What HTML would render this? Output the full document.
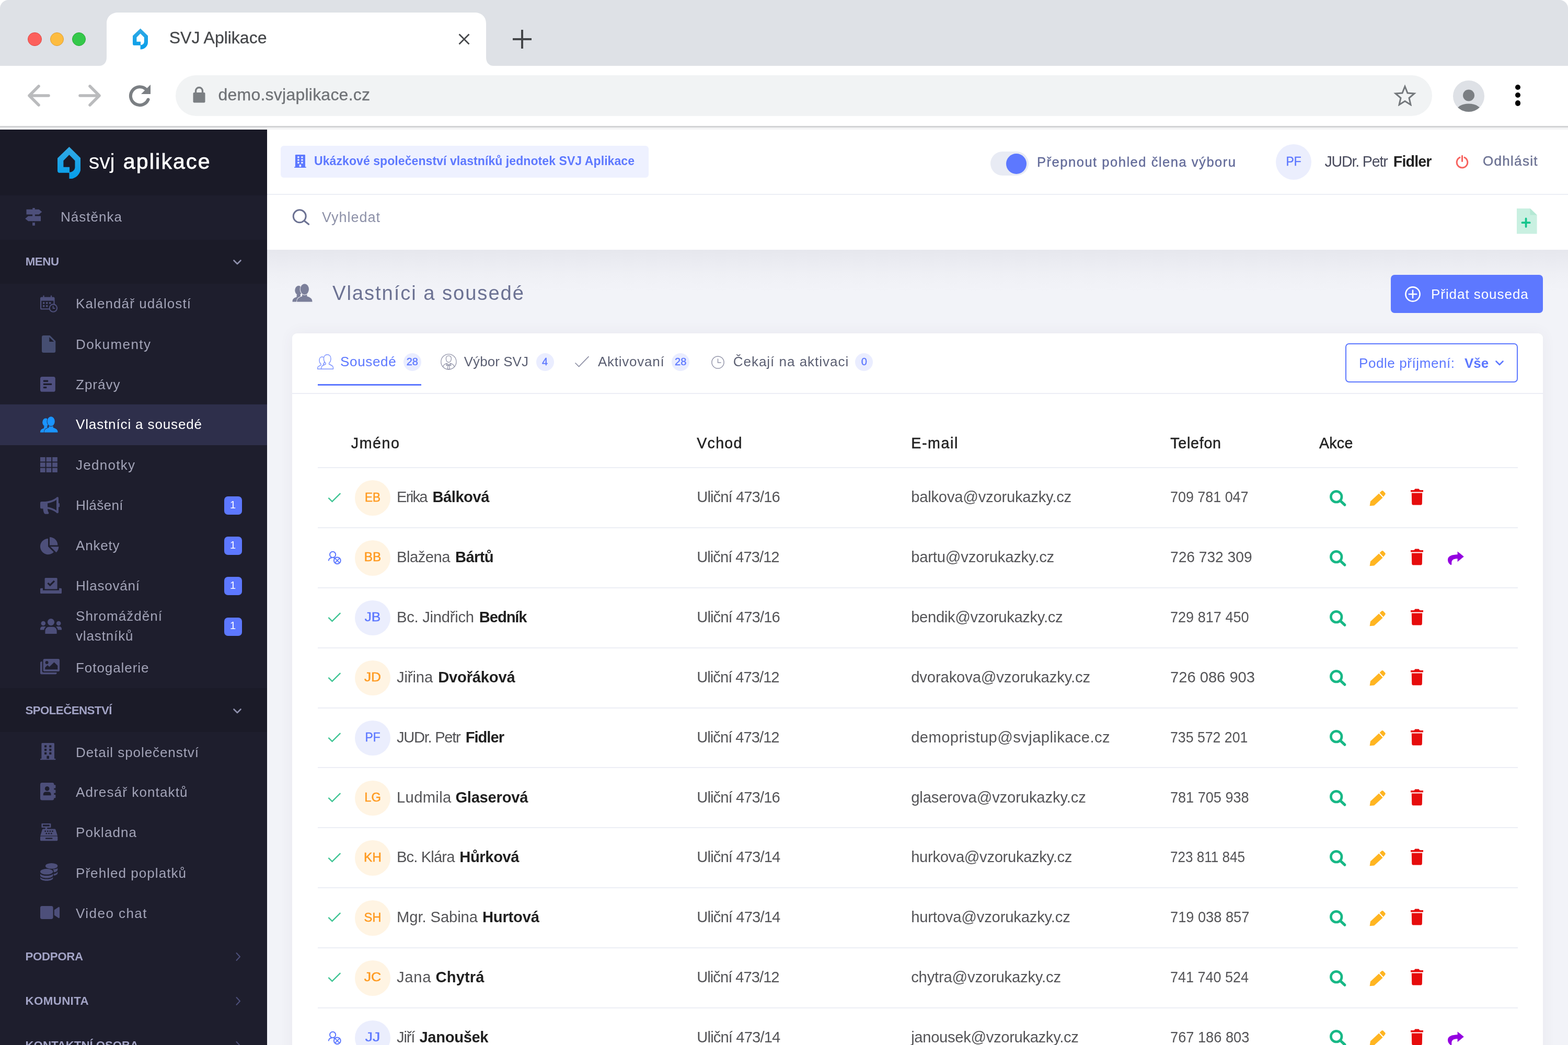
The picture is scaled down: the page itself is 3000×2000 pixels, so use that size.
<!DOCTYPE html>
<html lang="cs"><head><meta charset="utf-8"><title>SVJ Aplikace</title>
<style>
html,body{margin:0;padding:0;background:#fff;}
body{width:3000px;height:2000px;position:relative;overflow:hidden;font-family:"Liberation Sans",sans-serif;}
#root{position:absolute;left:0;top:0;width:3000px;height:2000px;overflow:hidden;will-change:transform;}
#root div,#root svg,#root span.t{position:absolute;display:block;}
span.t{white-space:pre;}
</style></head>
<body><div id="root">
<div style="left:0px;top:0px;width:3000px;height:126px;background:#dee1e6;border-radius:16px 16px 0 0;"></div>
<div style="left:0px;top:125.5px;width:3000px;height:116px;background:#ffffff;"></div>
<svg style="left:184px;top:23px" width="770" height="103" viewBox="184 23 770 103"><path d="M190 126 C198 126 204 120 204 110 L204 45 C204 32 213 24 226 24 L908 24 C921 24 930 32 930 45 L930 110 C930 120 936 126 944 126 Z" fill="#fff"/></svg>
<div style="left:53.300000000000004px;top:61.50000000000001px;width:24.8px;height:24.8px;border-radius:50%;background:#fc605c;border:1px solid #df4744"></div>
<div style="left:95.6px;top:61.50000000000001px;width:24.8px;height:24.8px;border-radius:50%;background:#fdbc40;border:1px solid #de9f34"></div>
<div style="left:137.6px;top:61.50000000000001px;width:24.8px;height:24.8px;border-radius:50%;background:#34c84a;border:1px solid #27aa35"></div>
<svg style="left:254px;top:54px" width="29" height="41" viewBox="468 62 262 363"><defs><linearGradient id="lg1" x1="0" y1="0" x2="0" y2="1"><stop offset="0" stop-color="#33a9e4"/><stop offset="1" stop-color="#049eea"/></linearGradient></defs><path fill-rule="evenodd" fill="url(#lg1)" d="M600 62 L730 190 L730 300 A130 125 0 0 1 600 425 L600 355 L494 355 Q468 355 468 329 L468 190 Z M600 152 L535 217 L535 290 L604 290 L604 349 A62 58 0 0 0 665 295 L665 217 Z"/></svg>
<svg style="left:876px;top:63px" width="24" height="24" viewBox="0 0 24 24"><path d="M2.5 2.5 L21.5 21.5 M21.5 2.5 L2.5 21.5" stroke="#45474a" stroke-width="2.8" fill="none"/></svg>
<svg style="left:980px;top:56px" width="38" height="38" viewBox="0 0 38 38"><path d="M19 1 V37 M1 19 H37" stroke="#45474a" stroke-width="4" fill="none"/></svg>
<svg style="left:50px;top:160px" width="50" height="46" viewBox="0 0 50 46"><path d="M43 23 H7 M24 5 L6 23 L24 41" stroke="#babbbd" stroke-width="5.5" fill="none" stroke-linecap="round" stroke-linejoin="round"/></svg>
<svg style="left:146px;top:160px" width="50" height="46" viewBox="0 0 50 46"><path d="M7 23 H43 M26 5 L44 23 L26 41" stroke="#babbbd" stroke-width="5.5" fill="none" stroke-linecap="round" stroke-linejoin="round"/></svg>
<svg style="left:242px;top:158px" width="52" height="52" viewBox="0 0 52 52"><path d="M41.5 32.5 A17.5 17.5 0 1 1 38 13.5" stroke="#7b7f83" stroke-width="6" fill="none" stroke-linecap="round"/><path d="M46 4 V22 H28 Z" fill="#7b7f83"/></svg>
<div style="left:336px;top:144px;width:2404px;height:78px;background:#f1f3f4;border-radius:39px;"></div>
<svg style="left:369px;top:165px" width="24" height="32" viewBox="0 0 24 32"><path d="M5.5 13 V9 a6.5 6.5 0 0 1 13 0 V13" stroke="#7b7f83" stroke-width="3.4" fill="none"/><rect x="0.5" y="12" width="23" height="19.5" rx="2" fill="#7b7f83"/></svg>
<svg style="left:2666px;top:161px" width="44" height="42" viewBox="0 0 44 42"><path d="M22 4.5 L27 17 L40 18 L30 26.5 L33 39.5 L22 32.5 L11 39.5 L14 26.5 L4 18 L17 17 Z" stroke="#74787c" stroke-width="3" fill="none" stroke-linejoin="miter"/></svg>
<svg style="left:2779.5px;top:153.5px" width="60" height="60" viewBox="0 0 60 60"><defs><clipPath id="cpa"><circle cx="30" cy="30" r="30"/></clipPath></defs><circle cx="30" cy="30" r="30" fill="#dee1e6"/><g clip-path="url(#cpa)" fill="#7b7f83"><circle cx="30" cy="28.5" r="11"/><ellipse cx="30" cy="62" rx="26" ry="17.5"/></g></svg>
<div style="left:2898.55px;top:161.55px;width:10.4px;height:10.4px;border-radius:50%;background:#000"></div>
<div style="left:2898.55px;top:177.0px;width:10.4px;height:10.4px;border-radius:50%;background:#000"></div>
<div style="left:2898.55px;top:192.4px;width:10.4px;height:10.4px;border-radius:50%;background:#000"></div>
<div style="left:0px;top:241px;width:3000px;height:3px;background:#d2d3d5;"></div>
<div style="left:0px;top:244px;width:3000px;height:4px;background:#f4f4f5;"></div>
<div style="left:511px;top:248px;width:2489px;height:1752px;background:#f2f3f8;"></div>
<div style="left:511px;top:477px;width:2489px;height:80px;background:linear-gradient(to bottom,#e6e7ed 0%,#eaebf1 28%,#eff0f5 60%,#f2f3f8 100%);"></div>
<div style="left:511px;top:248px;width:2489px;height:124px;background:#ffffff;"></div>
<div style="left:511px;top:371px;width:2489px;height:2px;background:#eceef5;"></div>
<div style="left:511px;top:373px;width:2489px;height:104.5px;background:#ffffff;"></div>
<div style="left:0px;top:248px;width:511px;height:1752px;background:#1e1e2d;"></div>
<div style="left:0px;top:248px;width:511px;height:126px;background:#1a1a27;"></div>
<div style="left:0px;top:458.5px;width:511px;height:84px;background:#1b1b28;"></div>
<div style="left:0px;top:774px;width:511px;height:77.5px;background:#2e2f4b;"></div>
<div style="left:0px;top:1317px;width:511px;height:84px;background:#1b1b28;"></div>
<svg style="left:109.6px;top:280.5px" width="44.5" height="61.8" viewBox="468 62 262 363"><path fill-rule="evenodd" fill="url(#lg1)" d="M600 62 L730 190 L730 300 A130 125 0 0 1 600 425 L600 355 L494 355 Q468 355 468 329 L468 190 Z M600 152 L535 217 L535 290 L604 290 L604 349 A62 58 0 0 0 665 295 L665 217 Z"/></svg>
<div style="left:428.6px;top:950.0px;width:34.6px;height:35px;background:#5d78ff;border-radius:7px;"></div>
<div style="left:428.6px;top:1027.0px;width:34.6px;height:35px;background:#5d78ff;border-radius:7px;"></div>
<div style="left:428.6px;top:1104.0px;width:34.6px;height:35px;background:#5d78ff;border-radius:7px;"></div>
<div style="left:428.6px;top:1181.5px;width:34.6px;height:35px;background:#5d78ff;border-radius:7px;"></div>
<svg style="left:444.2px;top:496.0px" width="20.0" height="12.0" viewBox="0 0 20 12"><path d="M3.5 2.5 L10 9 L16.5 2.5" stroke="#8f90ad" stroke-width="2.6" fill="none" stroke-linecap="round" stroke-linejoin="round"/></svg>
<svg style="left:444.2px;top:1355.0px" width="20.0" height="12.0" viewBox="0 0 20 12"><path d="M3.5 2.5 L10 9 L16.5 2.5" stroke="#8f90ad" stroke-width="2.6" fill="none" stroke-linecap="round" stroke-linejoin="round"/></svg>
<svg style="left:449.5px;top:1821px" width="12" height="20" viewBox="0 0 12 20"><path d="M2.5 3 L9 10 L2.5 17" stroke="#4d4f7a" stroke-width="2" fill="none" stroke-linecap="round" stroke-linejoin="round"/></svg>
<svg style="left:449.5px;top:1906px" width="12" height="20" viewBox="0 0 12 20"><path d="M2.5 3 L9 10 L2.5 17" stroke="#4d4f7a" stroke-width="2" fill="none" stroke-linecap="round" stroke-linejoin="round"/></svg>
<svg style="left:449.5px;top:1991px" width="12" height="20" viewBox="0 0 12 20"><path d="M2.5 3 L9 10 L2.5 17" stroke="#4d4f7a" stroke-width="2" fill="none" stroke-linecap="round" stroke-linejoin="round"/></svg>
<div style="left:536.7px;top:279px;width:704px;height:61px;background:#eef1ff;border-radius:6px;"></div>
<div style="left:1894.5px;top:290px;width:73.5px;height:46px;background:#e8ebf4;border-radius:23px;"></div>
<div style="left:1924.75px;top:293.5px;width:39.5px;height:39.5px;background:#5d78ff;border-radius:50%;"></div>
<div style="left:2440.5px;top:276px;width:68px;height:68px;background:#ebeefd;border-radius:50%;"></div>
<div style="left:2660.5px;top:525.75px;width:291.25px;height:73.5px;background:#5d78ff;border-radius:7px;"></div>
<div style="left:559.3px;top:637.5px;width:2392.5px;height:1400px;background:#ffffff;border-radius:9px;box-shadow:0 0 28px rgba(82,63,105,0.06);"></div>
<div style="left:559.3px;top:751.5px;width:2392.5px;height:2px;background:#eceef5;"></div>
<div style="left:771.8px;top:676.2px;width:34px;height:34px;background:#eaedff;border-radius:50%;"></div>
<div style="left:1025.5px;top:676.2px;width:34px;height:34px;background:#eaedff;border-radius:50%;"></div>
<div style="left:1285.2px;top:676.2px;width:34px;height:34px;background:#eaedff;border-radius:50%;"></div>
<div style="left:1636.2px;top:676.2px;width:34px;height:34px;background:#eaedff;border-radius:50%;"></div>
<div style="left:607.7px;top:735px;width:198.6px;height:3.2px;background:#5d78ff;"></div>
<div style="left:2573.75px;top:657px;width:326px;height:71px;border:2px solid #5d78ff;border-radius:7px;background:#fff"></div>
<svg style="left:2859.0px;top:688.5px" width="20.0" height="12.0" viewBox="0 0 20 12"><path d="M3.5 2.5 L10 9 L16.5 2.5" stroke="#5d78ff" stroke-width="2.6" fill="none" stroke-linecap="round" stroke-linejoin="round"/></svg>
<div style="left:607.5px;top:894.1px;width:2296px;height:2px;background:#eceef5;"></div>
<div style="left:679.25px;top:919.25px;width:67.5px;height:67.5px;background:#fff4e3;border-radius:50%;"></div>
<svg style="left:626px;top:938.5px;overflow:visible" width="28" height="20" viewBox="0 -1.6 28 20"><path d="M2.4 12.3 L9.5 19.2 L25.3 3.5" fill="none" stroke="#3ec493" stroke-width="2.3"/></svg>
<svg style="left:2544.3px;top:937.8px;overflow:visible" width="31.5" height="30.8" viewBox="0 0 31.5 30.8"><circle cx="12.7" cy="12.7" r="10.3" fill="none" stroke="#18b886" stroke-width="4.7"/><path d="M20.6 20.6 L28.8 28.2" stroke="#18b886" stroke-width="5.2" stroke-linecap="round"/></svg>
<svg style="left:2620px;top:937.8px;overflow:visible" width="31.3" height="30.8" viewBox="0 0 31.3 30.8"><g fill="#ffb521"><path d="M0.6 30.3 L2 21.4 L18.2 6.6 L25.6 14.4 L9.2 29.4 Z"/><path d="M19.6 5.2 L23.4 1.6 Q25 0.2 26.6 1.8 L30.2 5.6 Q31.6 7.2 30 8.8 L26.8 12.8 Z"/></g></svg>
<svg style="left:2698.6px;top:935.3px;overflow:visible" width="24" height="31.6" viewBox="0 0 24 31.6"><g fill="#e60c0c"><path d="M0 3 H6.5 L8.4 0.4 H15.6 L17.5 3 H24 V6.6 H0 Z"/><path d="M1.8 8.6 H22.2 L21.8 28.4 Q21.6 31.6 18.4 31.6 H5.6 Q2.4 31.6 2.2 28.4 Z"/></g></svg>
<div style="left:607.5px;top:1008.95px;width:2296px;height:2px;background:#eceef5;"></div>
<div style="left:679.25px;top:1034.1px;width:67.5px;height:67.5px;background:#fff4e3;border-radius:50%;"></div>
<svg style="left:626px;top:1053.85px;overflow:visible" width="30" height="30" viewBox="0 0 30 30"><g fill="none" stroke="#5d78ff" stroke-width="2"><circle cx="10.6" cy="7.4" r="5.6"/>
<path d="M2.6 19.4 C3 15.6 6 13.4 9.4 13.2"/><path d="M11.8 13.2 C13.2 13.4 14.2 13.8 15 14.4"/><circle cx="19.3" cy="18.8" r="6.4"/><path d="M14.8 14.3 L23.8 23.3 M23.8 14.3 L14.8 23.3" stroke-width="1.7"/></g></svg>
<svg style="left:2544.3px;top:1052.6499999999999px;overflow:visible" width="31.5" height="30.8" viewBox="0 0 31.5 30.8"><circle cx="12.7" cy="12.7" r="10.3" fill="none" stroke="#18b886" stroke-width="4.7"/><path d="M20.6 20.6 L28.8 28.2" stroke="#18b886" stroke-width="5.2" stroke-linecap="round"/></svg>
<svg style="left:2620px;top:1052.6499999999999px;overflow:visible" width="31.3" height="30.8" viewBox="0 0 31.3 30.8"><g fill="#ffb521"><path d="M0.6 30.3 L2 21.4 L18.2 6.6 L25.6 14.4 L9.2 29.4 Z"/><path d="M19.6 5.2 L23.4 1.6 Q25 0.2 26.6 1.8 L30.2 5.6 Q31.6 7.2 30 8.8 L26.8 12.8 Z"/></g></svg>
<svg style="left:2698.6px;top:1050.1499999999999px;overflow:visible" width="24" height="31.6" viewBox="0 0 24 31.6"><g fill="#e60c0c"><path d="M0 3 H6.5 L8.4 0.4 H15.6 L17.5 3 H24 V6.6 H0 Z"/><path d="M1.8 8.6 H22.2 L21.8 28.4 Q21.6 31.6 18.4 31.6 H5.6 Q2.4 31.6 2.2 28.4 Z"/></g></svg>
<svg style="left:2770.4px;top:1054.85px;overflow:visible" width="31" height="27" viewBox="0 0 31 27"><path d="M18.6 0.4 L30.8 10.2 L18.6 20.2 V14.3 C10.5 14.3 6.6 17 7.4 24 Q7.6 25.8 6 26.6 C2.2 24 0 20.4 0 16.4 C0 9 8 6.4 18.6 6.2 Z" fill="#9400e0"/></svg>
<div style="left:607.5px;top:1123.8px;width:2296px;height:2px;background:#eceef5;"></div>
<div style="left:679.25px;top:1148.95px;width:67.5px;height:67.5px;background:#ebeefd;border-radius:50%;"></div>
<svg style="left:626px;top:1168.2px;overflow:visible" width="28" height="20" viewBox="0 -1.6 28 20"><path d="M2.4 12.3 L9.5 19.2 L25.3 3.5" fill="none" stroke="#3ec493" stroke-width="2.3"/></svg>
<svg style="left:2544.3px;top:1167.5px;overflow:visible" width="31.5" height="30.8" viewBox="0 0 31.5 30.8"><circle cx="12.7" cy="12.7" r="10.3" fill="none" stroke="#18b886" stroke-width="4.7"/><path d="M20.6 20.6 L28.8 28.2" stroke="#18b886" stroke-width="5.2" stroke-linecap="round"/></svg>
<svg style="left:2620px;top:1167.5px;overflow:visible" width="31.3" height="30.8" viewBox="0 0 31.3 30.8"><g fill="#ffb521"><path d="M0.6 30.3 L2 21.4 L18.2 6.6 L25.6 14.4 L9.2 29.4 Z"/><path d="M19.6 5.2 L23.4 1.6 Q25 0.2 26.6 1.8 L30.2 5.6 Q31.6 7.2 30 8.8 L26.8 12.8 Z"/></g></svg>
<svg style="left:2698.6px;top:1165.0px;overflow:visible" width="24" height="31.6" viewBox="0 0 24 31.6"><g fill="#e60c0c"><path d="M0 3 H6.5 L8.4 0.4 H15.6 L17.5 3 H24 V6.6 H0 Z"/><path d="M1.8 8.6 H22.2 L21.8 28.4 Q21.6 31.6 18.4 31.6 H5.6 Q2.4 31.6 2.2 28.4 Z"/></g></svg>
<div style="left:607.5px;top:1238.6499999999999px;width:2296px;height:2px;background:#eceef5;"></div>
<div style="left:679.25px;top:1263.8px;width:67.5px;height:67.5px;background:#fff4e3;border-radius:50%;"></div>
<svg style="left:626px;top:1283.05px;overflow:visible" width="28" height="20" viewBox="0 -1.6 28 20"><path d="M2.4 12.3 L9.5 19.2 L25.3 3.5" fill="none" stroke="#3ec493" stroke-width="2.3"/></svg>
<svg style="left:2544.3px;top:1282.35px;overflow:visible" width="31.5" height="30.8" viewBox="0 0 31.5 30.8"><circle cx="12.7" cy="12.7" r="10.3" fill="none" stroke="#18b886" stroke-width="4.7"/><path d="M20.6 20.6 L28.8 28.2" stroke="#18b886" stroke-width="5.2" stroke-linecap="round"/></svg>
<svg style="left:2620px;top:1282.35px;overflow:visible" width="31.3" height="30.8" viewBox="0 0 31.3 30.8"><g fill="#ffb521"><path d="M0.6 30.3 L2 21.4 L18.2 6.6 L25.6 14.4 L9.2 29.4 Z"/><path d="M19.6 5.2 L23.4 1.6 Q25 0.2 26.6 1.8 L30.2 5.6 Q31.6 7.2 30 8.8 L26.8 12.8 Z"/></g></svg>
<svg style="left:2698.6px;top:1279.85px;overflow:visible" width="24" height="31.6" viewBox="0 0 24 31.6"><g fill="#e60c0c"><path d="M0 3 H6.5 L8.4 0.4 H15.6 L17.5 3 H24 V6.6 H0 Z"/><path d="M1.8 8.6 H22.2 L21.8 28.4 Q21.6 31.6 18.4 31.6 H5.6 Q2.4 31.6 2.2 28.4 Z"/></g></svg>
<div style="left:607.5px;top:1353.5px;width:2296px;height:2px;background:#eceef5;"></div>
<div style="left:679.25px;top:1378.65px;width:67.5px;height:67.5px;background:#ebeefd;border-radius:50%;"></div>
<svg style="left:626px;top:1397.9px;overflow:visible" width="28" height="20" viewBox="0 -1.6 28 20"><path d="M2.4 12.3 L9.5 19.2 L25.3 3.5" fill="none" stroke="#3ec493" stroke-width="2.3"/></svg>
<svg style="left:2544.3px;top:1397.2px;overflow:visible" width="31.5" height="30.8" viewBox="0 0 31.5 30.8"><circle cx="12.7" cy="12.7" r="10.3" fill="none" stroke="#18b886" stroke-width="4.7"/><path d="M20.6 20.6 L28.8 28.2" stroke="#18b886" stroke-width="5.2" stroke-linecap="round"/></svg>
<svg style="left:2620px;top:1397.2px;overflow:visible" width="31.3" height="30.8" viewBox="0 0 31.3 30.8"><g fill="#ffb521"><path d="M0.6 30.3 L2 21.4 L18.2 6.6 L25.6 14.4 L9.2 29.4 Z"/><path d="M19.6 5.2 L23.4 1.6 Q25 0.2 26.6 1.8 L30.2 5.6 Q31.6 7.2 30 8.8 L26.8 12.8 Z"/></g></svg>
<svg style="left:2698.6px;top:1394.7px;overflow:visible" width="24" height="31.6" viewBox="0 0 24 31.6"><g fill="#e60c0c"><path d="M0 3 H6.5 L8.4 0.4 H15.6 L17.5 3 H24 V6.6 H0 Z"/><path d="M1.8 8.6 H22.2 L21.8 28.4 Q21.6 31.6 18.4 31.6 H5.6 Q2.4 31.6 2.2 28.4 Z"/></g></svg>
<div style="left:607.5px;top:1468.35px;width:2296px;height:2px;background:#eceef5;"></div>
<div style="left:679.25px;top:1493.5px;width:67.5px;height:67.5px;background:#fff4e3;border-radius:50%;"></div>
<svg style="left:626px;top:1512.75px;overflow:visible" width="28" height="20" viewBox="0 -1.6 28 20"><path d="M2.4 12.3 L9.5 19.2 L25.3 3.5" fill="none" stroke="#3ec493" stroke-width="2.3"/></svg>
<svg style="left:2544.3px;top:1512.05px;overflow:visible" width="31.5" height="30.8" viewBox="0 0 31.5 30.8"><circle cx="12.7" cy="12.7" r="10.3" fill="none" stroke="#18b886" stroke-width="4.7"/><path d="M20.6 20.6 L28.8 28.2" stroke="#18b886" stroke-width="5.2" stroke-linecap="round"/></svg>
<svg style="left:2620px;top:1512.05px;overflow:visible" width="31.3" height="30.8" viewBox="0 0 31.3 30.8"><g fill="#ffb521"><path d="M0.6 30.3 L2 21.4 L18.2 6.6 L25.6 14.4 L9.2 29.4 Z"/><path d="M19.6 5.2 L23.4 1.6 Q25 0.2 26.6 1.8 L30.2 5.6 Q31.6 7.2 30 8.8 L26.8 12.8 Z"/></g></svg>
<svg style="left:2698.6px;top:1509.55px;overflow:visible" width="24" height="31.6" viewBox="0 0 24 31.6"><g fill="#e60c0c"><path d="M0 3 H6.5 L8.4 0.4 H15.6 L17.5 3 H24 V6.6 H0 Z"/><path d="M1.8 8.6 H22.2 L21.8 28.4 Q21.6 31.6 18.4 31.6 H5.6 Q2.4 31.6 2.2 28.4 Z"/></g></svg>
<div style="left:607.5px;top:1583.1999999999998px;width:2296px;height:2px;background:#eceef5;"></div>
<div style="left:679.25px;top:1608.35px;width:67.5px;height:67.5px;background:#fff4e3;border-radius:50%;"></div>
<svg style="left:626px;top:1627.6px;overflow:visible" width="28" height="20" viewBox="0 -1.6 28 20"><path d="M2.4 12.3 L9.5 19.2 L25.3 3.5" fill="none" stroke="#3ec493" stroke-width="2.3"/></svg>
<svg style="left:2544.3px;top:1626.8999999999999px;overflow:visible" width="31.5" height="30.8" viewBox="0 0 31.5 30.8"><circle cx="12.7" cy="12.7" r="10.3" fill="none" stroke="#18b886" stroke-width="4.7"/><path d="M20.6 20.6 L28.8 28.2" stroke="#18b886" stroke-width="5.2" stroke-linecap="round"/></svg>
<svg style="left:2620px;top:1626.8999999999999px;overflow:visible" width="31.3" height="30.8" viewBox="0 0 31.3 30.8"><g fill="#ffb521"><path d="M0.6 30.3 L2 21.4 L18.2 6.6 L25.6 14.4 L9.2 29.4 Z"/><path d="M19.6 5.2 L23.4 1.6 Q25 0.2 26.6 1.8 L30.2 5.6 Q31.6 7.2 30 8.8 L26.8 12.8 Z"/></g></svg>
<svg style="left:2698.6px;top:1624.3999999999999px;overflow:visible" width="24" height="31.6" viewBox="0 0 24 31.6"><g fill="#e60c0c"><path d="M0 3 H6.5 L8.4 0.4 H15.6 L17.5 3 H24 V6.6 H0 Z"/><path d="M1.8 8.6 H22.2 L21.8 28.4 Q21.6 31.6 18.4 31.6 H5.6 Q2.4 31.6 2.2 28.4 Z"/></g></svg>
<div style="left:607.5px;top:1698.0499999999997px;width:2296px;height:2px;background:#eceef5;"></div>
<div style="left:679.25px;top:1723.1999999999998px;width:67.5px;height:67.5px;background:#fff4e3;border-radius:50%;"></div>
<svg style="left:626px;top:1742.4499999999998px;overflow:visible" width="28" height="20" viewBox="0 -1.6 28 20"><path d="M2.4 12.3 L9.5 19.2 L25.3 3.5" fill="none" stroke="#3ec493" stroke-width="2.3"/></svg>
<svg style="left:2544.3px;top:1741.7499999999998px;overflow:visible" width="31.5" height="30.8" viewBox="0 0 31.5 30.8"><circle cx="12.7" cy="12.7" r="10.3" fill="none" stroke="#18b886" stroke-width="4.7"/><path d="M20.6 20.6 L28.8 28.2" stroke="#18b886" stroke-width="5.2" stroke-linecap="round"/></svg>
<svg style="left:2620px;top:1741.7499999999998px;overflow:visible" width="31.3" height="30.8" viewBox="0 0 31.3 30.8"><g fill="#ffb521"><path d="M0.6 30.3 L2 21.4 L18.2 6.6 L25.6 14.4 L9.2 29.4 Z"/><path d="M19.6 5.2 L23.4 1.6 Q25 0.2 26.6 1.8 L30.2 5.6 Q31.6 7.2 30 8.8 L26.8 12.8 Z"/></g></svg>
<svg style="left:2698.6px;top:1739.2499999999998px;overflow:visible" width="24" height="31.6" viewBox="0 0 24 31.6"><g fill="#e60c0c"><path d="M0 3 H6.5 L8.4 0.4 H15.6 L17.5 3 H24 V6.6 H0 Z"/><path d="M1.8 8.6 H22.2 L21.8 28.4 Q21.6 31.6 18.4 31.6 H5.6 Q2.4 31.6 2.2 28.4 Z"/></g></svg>
<div style="left:607.5px;top:1812.8999999999999px;width:2296px;height:2px;background:#eceef5;"></div>
<div style="left:679.25px;top:1838.05px;width:67.5px;height:67.5px;background:#fff4e3;border-radius:50%;"></div>
<svg style="left:626px;top:1857.3px;overflow:visible" width="28" height="20" viewBox="0 -1.6 28 20"><path d="M2.4 12.3 L9.5 19.2 L25.3 3.5" fill="none" stroke="#3ec493" stroke-width="2.3"/></svg>
<svg style="left:2544.3px;top:1856.6px;overflow:visible" width="31.5" height="30.8" viewBox="0 0 31.5 30.8"><circle cx="12.7" cy="12.7" r="10.3" fill="none" stroke="#18b886" stroke-width="4.7"/><path d="M20.6 20.6 L28.8 28.2" stroke="#18b886" stroke-width="5.2" stroke-linecap="round"/></svg>
<svg style="left:2620px;top:1856.6px;overflow:visible" width="31.3" height="30.8" viewBox="0 0 31.3 30.8"><g fill="#ffb521"><path d="M0.6 30.3 L2 21.4 L18.2 6.6 L25.6 14.4 L9.2 29.4 Z"/><path d="M19.6 5.2 L23.4 1.6 Q25 0.2 26.6 1.8 L30.2 5.6 Q31.6 7.2 30 8.8 L26.8 12.8 Z"/></g></svg>
<svg style="left:2698.6px;top:1854.1px;overflow:visible" width="24" height="31.6" viewBox="0 0 24 31.6"><g fill="#e60c0c"><path d="M0 3 H6.5 L8.4 0.4 H15.6 L17.5 3 H24 V6.6 H0 Z"/><path d="M1.8 8.6 H22.2 L21.8 28.4 Q21.6 31.6 18.4 31.6 H5.6 Q2.4 31.6 2.2 28.4 Z"/></g></svg>
<div style="left:607.5px;top:1927.7499999999998px;width:2296px;height:2px;background:#eceef5;"></div>
<div style="left:679.25px;top:1952.8999999999999px;width:67.5px;height:67.5px;background:#ebeefd;border-radius:50%;"></div>
<svg style="left:626px;top:1972.6499999999999px;overflow:visible" width="30" height="30" viewBox="0 0 30 30"><g fill="none" stroke="#5d78ff" stroke-width="2"><circle cx="10.6" cy="7.4" r="5.6"/>
<path d="M2.6 19.4 C3 15.6 6 13.4 9.4 13.2"/><path d="M11.8 13.2 C13.2 13.4 14.2 13.8 15 14.4"/><circle cx="19.3" cy="18.8" r="6.4"/><path d="M14.8 14.3 L23.8 23.3 M23.8 14.3 L14.8 23.3" stroke-width="1.7"/></g></svg>
<svg style="left:2544.3px;top:1971.4499999999998px;overflow:visible" width="31.5" height="30.8" viewBox="0 0 31.5 30.8"><circle cx="12.7" cy="12.7" r="10.3" fill="none" stroke="#18b886" stroke-width="4.7"/><path d="M20.6 20.6 L28.8 28.2" stroke="#18b886" stroke-width="5.2" stroke-linecap="round"/></svg>
<svg style="left:2620px;top:1971.4499999999998px;overflow:visible" width="31.3" height="30.8" viewBox="0 0 31.3 30.8"><g fill="#ffb521"><path d="M0.6 30.3 L2 21.4 L18.2 6.6 L25.6 14.4 L9.2 29.4 Z"/><path d="M19.6 5.2 L23.4 1.6 Q25 0.2 26.6 1.8 L30.2 5.6 Q31.6 7.2 30 8.8 L26.8 12.8 Z"/></g></svg>
<svg style="left:2698.6px;top:1968.9499999999998px;overflow:visible" width="24" height="31.6" viewBox="0 0 24 31.6"><g fill="#e60c0c"><path d="M0 3 H6.5 L8.4 0.4 H15.6 L17.5 3 H24 V6.6 H0 Z"/><path d="M1.8 8.6 H22.2 L21.8 28.4 Q21.6 31.6 18.4 31.6 H5.6 Q2.4 31.6 2.2 28.4 Z"/></g></svg>
<svg style="left:2770.4px;top:1973.6499999999999px;overflow:visible" width="31" height="27" viewBox="0 0 31 27"><path d="M18.6 0.4 L30.8 10.2 L18.6 20.2 V14.3 C10.5 14.3 6.6 17 7.4 24 Q7.6 25.8 6 26.6 C2.2 24 0 20.4 0 16.4 C0 9 8 6.4 18.6 6.2 Z" fill="#9400e0"/></svg>
<svg style="left:48.4px;top:398.4px;overflow:visible" width="33" height="33.5" viewBox="0 0 33 33.5"><g fill="#4d4f7a"><rect x="14.3" y="0" width="4.4" height="33.5"/>
<path d="M2.5 2.8 H26.5 L32.3 7.6 L26.5 12.4 H2.5 Z"/><path d="M30 15.6 H6 L0.2 20.4 L6 25.2 H30 Z"/></g>
<rect x="14.3" y="12.4" width="4.4" height="3.2" fill="#4d4f7a"/><rect x="14.3" y="25.2" width="4.4" height="3" fill="#1e1e2d"/><rect x="14.3" y="28.2" width="4.4" height="5.3" fill="#4d4f7a"/></svg>
<svg style="left:77px;top:564.7px;overflow:visible" width="33.5" height="32.8" viewBox="0 0 33.5 32.8"><g fill="none" stroke="#4d4f7a" stroke-width="2.2"><rect x="1.1" y="4.6" width="25.4" height="21.8" rx="1.5"/>
<path d="M6.5 0.5 V6 M21 0.5 V6"/></g><rect x="1.1" y="4.6" width="25.4" height="6" fill="#4d4f7a"/>
<g fill="#4d4f7a"><rect x="5" y="13.2" width="3.4" height="3.4"/><rect x="11" y="13.2" width="3.4" height="3.4"/><rect x="17" y="13.2" width="3.4" height="3.4"/><rect x="5" y="19" width="3.4" height="3.4"/><rect x="11" y="19" width="3.4" height="3.4"/></g>
<circle cx="24.9" cy="24.6" r="7.2" fill="#1e1e2d" stroke="#4d4f7a" stroke-width="2.1"/><path d="M24.6 20.5 V25 H28.3" fill="none" stroke="#4d4f7a" stroke-width="1.9"/></svg>
<svg style="left:80.4px;top:641.6px;overflow:visible" width="26.3" height="32.9" viewBox="0 0 26.3 32.9"><path d="M3.2 0 H15.5 L26.3 10.8 V29.7 a3.2 3.2 0 0 1 -3.2 3.2 H3.2 a3.2 3.2 0 0 1 -3.2 -3.2 V3.2 a3.2 3.2 0 0 1 3.2 -3.2 Z" fill="#464e72"/>
<path d="M14.3 3.2 V12 H23.3 Z" fill="#1e1e2d"/></svg>
<svg style="left:77.2px;top:720.8px;overflow:visible" width="28.8" height="28.8" viewBox="0 0 28.8 28.8"><rect width="28.8" height="28.8" rx="3.6" fill="#4f5080"/>
<g fill="#1e1e2d"><rect x="5.8" y="6.6" width="9.4" height="3.3" rx="1"/><rect x="5.8" y="12.8" width="16.4" height="3.3" rx="1"/><rect x="5.8" y="19" width="6.6" height="3.3" rx="1"/></g></svg>
<svg style="left:77px;top:797.2px;overflow:visible" width="33.6" height="30.8" viewBox="0 0 33.6 30.8"><g fill="#1a94ff">
<ellipse cx="10.4" cy="11.2" rx="6.2" ry="7.8"/><path d="M0 30.8 C0 26 1.5 24.6 7.2 22.4 V18.5 H13.6 V22.4 C17 24 19 25.5 19 30.8 Z"/></g>
<g fill="#1a94ff" stroke="#2e2f4b" stroke-width="1.8" paint-order="stroke">
<path d="M7.6 30.8 C7.6 25.5 9.5 24 16.5 21.3 V17 H24.6 V21.3 C31.5 24 33.6 25.5 33.6 30.8 Z"/><ellipse cx="20.6" cy="9.4" rx="7.2" ry="9.2"/></g>
<rect x="-1" y="30.8" width="36" height="3" fill="#2e2f4b"/></svg>
<svg style="left:77.2px;top:875.2px;overflow:visible" width="32.8" height="29" viewBox="0 0 32.8 29"><g fill="#4d4f7a"><rect x="0" y="0" width="9.6" height="8.4"/><rect x="0" y="10.3" width="9.6" height="8.4"/><rect x="0" y="20.6" width="9.6" height="8.4"/><rect x="11.6" y="0" width="9.6" height="8.4"/><rect x="11.6" y="10.3" width="9.6" height="8.4"/><rect x="11.6" y="20.6" width="9.6" height="8.4"/><rect x="23.2" y="0" width="9.6" height="8.4"/><rect x="23.2" y="10.3" width="9.6" height="8.4"/><rect x="23.2" y="20.6" width="9.6" height="8.4"/></g></svg>
<svg style="left:77px;top:950.6px;overflow:visible" width="37" height="32.8" viewBox="0 0 37 32.8"><g fill="#4d4f7a"><path d="M2.5 9 H11 V22.5 H2.5 A2.5 2.5 0 0 1 0 20 V11.5 A2.5 2.5 0 0 1 2.5 9 Z"/>
<path d="M10 9 C20 8 27 5 32 0.3 Q35 -0.6 35 2.5 V29 Q35 32 32 31.2 C27 26.5 20 23.5 10 22.5 Z M14 12.2 V19.3 C20.5 20.3 26.5 22.5 31 26 V5.5 C26.5 9 20.5 11.2 14 12.2 Z" fill-rule="evenodd"/>
<rect x="34.4" y="12" width="2.6" height="7.5" rx="1.2"/>
<path d="M5.5 22 H14 C14 25 14.6 27.6 16.2 30 Q17 31.6 15.2 32.8 H10 Q8 32.8 7.3 31 C6 28 5.5 25 5.5 22 Z"/></g></svg>
<svg style="left:77px;top:1027.7px;overflow:visible" width="35.3" height="33.2" viewBox="0 0 35.3 33.2"><g fill="#4d4f7a"><path d="M15 2.8 A15.2 15.2 0 1 0 25.8 28.8 L15 18 Z"/>
<path d="M18 0 A15.4 15.4 0 0 1 33.4 15.4 H18 Z"/><path d="M19.4 18.2 H35.3 A15.6 15.6 0 0 1 30.6 29.3 Z"/></g></svg>
<svg style="left:77px;top:1106px;overflow:visible" width="41" height="30" viewBox="0 0 41 30"><g fill="#4d4f7a"><rect x="8.6" y="0" width="24" height="22" rx="1.6"/>
<path d="M1.5 19.8 H5 V23.5 H36 V19.8 H39.5 A1.5 1.5 0 0 1 41 21.3 V28.5 A1.5 1.5 0 0 1 39.5 30 H1.5 A1.5 1.5 0 0 1 0 28.5 V21.3 A1.5 1.5 0 0 1 1.5 19.8 Z"/></g>
<path d="M14.5 9.8 L18.8 14 L27 5.8" fill="none" stroke="#1e1e2d" stroke-width="3.2"/><rect x="5" y="21.5" width="31" height="2" fill="#1e1e2d"/></svg>
<svg style="left:77px;top:1184px;overflow:visible" width="41" height="29" viewBox="0 0 41 29"><g fill="#4d4f7a"><circle cx="20.5" cy="6.6" r="6.6"/><path d="M9.4 29 V23 A7.2 7.2 0 0 1 16.6 15.8 H24.4 A7.2 7.2 0 0 1 31.6 23 V29 A0 0 0 0 1 31.6 29 Q31.6 29 29.5 29 H11.5 Z" />
<circle cx="5.8" cy="9" r="4.3"/><circle cx="35.2" cy="9" r="4.3"/>
<path d="M0 21.5 V19.4 A4.4 4.4 0 0 1 4.4 15 H8.4 Q10 15 11 15.8 Q7.6 17.8 7.3 21.5 Z"/><path d="M41 21.5 V19.4 A4.4 4.4 0 0 0 36.600000000000001 15 H32.6 Q31 15 30 15.8 Q33.4 17.8 33.7 21.5 Z"/></g></svg>
<svg style="left:77px;top:1260.6px;overflow:visible" width="37" height="29.5" viewBox="0 0 37 29.5"><g fill="#4d4f7a"><path d="M0 7.5 A2.5 2.5 0 0 1 2.5 5 H3.6 V23.6 A2.4 2.4 0 0 0 6 26 H31.5 V27 A2.5 2.5 0 0 1 29 29.5 H2.5 A2.5 2.5 0 0 1 0 27 Z"/>
<rect x="5.6" y="0" width="31.4" height="24" rx="2.6"/></g>
<circle cx="12.6" cy="7" r="3" fill="#1e1e2d"/><path d="M9.3 20.2 V16.5 L14 12 L17.5 15.3 L26.5 6.5 L33.3 13 V20.2 Z" fill="#1e1e2d"/></svg>
<svg style="left:77px;top:1421.7px;overflow:visible" width="29.4" height="32.3" viewBox="0 0 29.4 32.3"><g fill="#4d4f7a"><rect x="2.4" y="0" width="24.6" height="31" rx="1.5"/><rect x="0" y="30" width="29.4" height="2.3" rx="0.6"/></g>
<g fill="#1e1e2d"><rect x="8" y="4.2" width="4.2" height="4.2" rx="0.6"/><rect x="17.2" y="4.2" width="4.2" height="4.2" rx="0.6"/><rect x="8" y="11" width="4.2" height="4.2" rx="0.6"/><rect x="17.2" y="11" width="4.2" height="4.2" rx="0.6"/><rect x="8" y="17.8" width="4.2" height="4.2" rx="0.6"/><rect x="17.2" y="17.8" width="4.2" height="4.2" rx="0.6"/><rect x="12.4" y="24.6" width="4.6" height="5.6" rx="0.5"/></g></svg>
<svg style="left:77px;top:1498px;overflow:visible" width="29.4" height="33.4" viewBox="0 0 29.4 33.4"><g fill="#4d4f7a"><rect x="0" y="0" width="26.4" height="33.4" rx="3.4"/><rect x="25" y="4.2" width="4.4" height="6.2" rx="1"/><rect x="25" y="13.6" width="4.4" height="6.2" rx="1"/><rect x="25" y="23" width="4.4" height="6.2" rx="1"/></g>
<g fill="#1e1e2d"><circle cx="13.2" cy="11.4" r="4.3"/><path d="M5.8 24.2 V22 A4.6 4.6 0 0 1 10.4 17.4 H16 A4.6 4.6 0 0 1 20.6 22 V24.2 Z"/></g></svg>
<svg style="left:77px;top:1575.5px;overflow:visible" width="33.3" height="33.2" viewBox="0 0 33.3 33.2"><g fill="#4d4f7a"><path d="M3.4 0 H19.4 A1 1 0 0 1 20.4 1 V7 A1 1 0 0 1 19.4 8 H13.2 V10.6 H27.5 Q29 10.6 29.5 12 L33.1 23.6 H0.2 L3.8 12 Q4.3 10.6 5.8 10.6 H9.6 V8 H3.4 A1 1 0 0 1 2.4 7 V1 A1 1 0 0 1 3.4 0 Z"/>
<rect x="0" y="24.6" width="33.3" height="8.6" rx="1.4"/></g>
<g fill="#1e1e2d"><rect x="5" y="2.3" width="12.8" height="3.2"/><rect x="8.4" y="13.6" width="2.6" height="2.4"/><rect x="13" y="13.6" width="2.6" height="2.4"/><rect x="17.6" y="13.6" width="2.6" height="2.4"/><rect x="22.2" y="13.6" width="2.6" height="2.4"/>
<rect x="10.6" y="18" width="2.6" height="2.4"/><rect x="15.3" y="18" width="2.6" height="2.4"/><rect x="20" y="18" width="2.6" height="2.4"/><rect x="10" y="27.6" width="13.3" height="2.2" rx="0.6"/></g></svg>
<svg style="left:77px;top:1652px;overflow:visible" width="33.3" height="33.8" viewBox="0 0 33.3 33.8"><g fill="#4d4f7a"><ellipse cx="21.6" cy="5.4" rx="11.7" ry="5.4"/>
<path d="M33.3 9.4 V12.5 C33.3 15 30 17 25.8 17.6 V14.3 C25.4 13 24.6 12.2 24 11.7 C28 11.6 31.6 10.8 33.3 9.4 Z"/>
<path d="M33.3 16 V19 C33.3 21.3 30.3 23.2 25.8 23.9 V20.5 C29 20 31.8 19 33.3 16 Z" opacity="0.95"/>
<ellipse cx="12.2" cy="16.3" rx="12.2" ry="5.5"/>
<path d="M0 20.4 C2.5 23 7 24 12.2 24 C17.4 24 21.9 23 24.4 20.4 V23.4 C24.4 26.2 19 28.4 12.2 28.4 C5.4 28.4 0 26.2 0 23.4 Z"/>
<path d="M0 26.9 C2.5 29.5 7 30.5 12.2 30.5 C17.4 30.5 21.9 29.5 24.4 26.9 V28.8 C24.4 31.6 19 33.8 12.2 33.8 C5.4 33.8 0 31.6 0 28.8 Z"/></g></svg>
<svg style="left:77px;top:1734px;overflow:visible" width="37" height="25" viewBox="0 0 37 25"><g fill="#4d4f7a"><rect x="0" y="0" width="24.6" height="25" rx="3.4"/><path d="M26.8 7.6 L34.2 2.4 Q37 0.8 37 3.8 V21.2 Q37 24.2 34.2 22.6 L26.8 17.4 Z"/></g></svg>
<svg style="left:563px;top:296px;overflow:visible" width="22.8" height="25" viewBox="0 0 29.4 32.3"><g fill="#5d78ff"><rect x="2.4" y="0" width="24.6" height="31" rx="1.5"/><rect x="0" y="30" width="29.4" height="2.3" rx="0.6"/></g>
<g fill="#eef1ff"><rect x="8" y="4.2" width="4.2" height="4.2" rx="0.6"/><rect x="17.2" y="4.2" width="4.2" height="4.2" rx="0.6"/><rect x="8" y="11" width="4.2" height="4.2" rx="0.6"/><rect x="17.2" y="11" width="4.2" height="4.2" rx="0.6"/><rect x="8" y="17.8" width="4.2" height="4.2" rx="0.6"/><rect x="17.2" y="17.8" width="4.2" height="4.2" rx="0.6"/><rect x="12.4" y="24.6" width="4.6" height="5.6" rx="0.5"/></g></svg>
<svg style="left:559px;top:400px;overflow:visible" width="33.5" height="31" viewBox="0 0 33.5 31"><circle cx="14.2" cy="13.8" r="12" fill="none" stroke="#6c7293" stroke-width="3"/><path d="M23 22.4 L31.6 29.2" stroke="#6c7293" stroke-width="3.2" stroke-linecap="round"/></svg>
<svg style="left:2785px;top:297px;overflow:visible" width="25" height="25" viewBox="0 0 25 25"><path d="M8 4.4 A10.3 10.3 0 1 0 17 4.4" fill="none" stroke="#f7635f" stroke-width="3" stroke-linecap="round"/><path d="M12.5 1.2 V11.5" stroke="#f7635f" stroke-width="3" stroke-linecap="round"/></svg>
<svg style="left:2901.5px;top:399px;overflow:visible" width="38.6" height="48.6" viewBox="0 0 38.6 48.6"><path d="M0 0 H25.5 L38.6 12.6 V48.6 H0 Z" fill="#c9f0e1"/><path d="M25.5 0 L38.6 12.6 H25.5 Z" fill="#b4e8d4"/><path d="M17.6 19.4 V35 M10.4 27.2 H24.8" stroke="#14c48c" stroke-width="3.7" stroke-linecap="round"/></svg>
<svg style="left:558.7px;top:542.7px;overflow:visible" width="39" height="34.8" viewBox="0 0 33.6 30.8"><g fill="#7b7f9a">
<ellipse cx="10.4" cy="11.2" rx="6.2" ry="7.8"/><path d="M0 30.8 C0 26 1.5 24.6 7.2 22.4 V18.5 H13.6 V22.4 C17 24 19 25.5 19 30.8 Z"/></g>
<g fill="#7b7f9a" stroke="#f0f1f6" stroke-width="1.8" paint-order="stroke">
<path d="M7.6 30.8 C7.6 25.5 9.5 24 16.5 21.3 V17 H24.6 V21.3 C31.5 24 33.6 25.5 33.6 30.8 Z"/><ellipse cx="20.6" cy="9.4" rx="7.2" ry="9.2"/></g>
<rect x="-1" y="30.8" width="36" height="3" fill="#f0f1f6"/></svg>
<svg style="left:2688px;top:547.5px;overflow:visible" width="30" height="30" viewBox="0 0 30 30"><circle cx="15" cy="15" r="13.6" fill="none" stroke="#fff" stroke-width="2.6"/><path d="M15 7.8 V22.2 M7.8 15 H22.2" stroke="#fff" stroke-width="2.6" stroke-linecap="round"/></svg>
<svg style="left:607.4px;top:677.9px;overflow:visible" width="31.2" height="29" viewBox="0 0 31.2 29"><g fill="#fff" stroke="#7d93ff" stroke-width="1.4" stroke-linejoin="round">
<path d="M0.7 28.3 V26.5 C0.7 24 2 23 7 20.8 V18.6 C5 17 4 14.5 4 11.5 C4 7.8 6 5 9.2 5 C12.4 5 14.4 7.8 14.4 11.5 C14.4 14.5 13.4 17 11.6 18.6 V20.8 C15 22 17.5 23.5 17.5 26.5 V28.3 Z"/>
<path d="M7.6 28.3 V26.2 C7.6 23 9.5 21.8 16 19 V16.8 C13.6 15 12.4 12 12.4 8.6 C12.4 4 15 0.7 19.2 0.7 C23.4 0.7 26 4 26 8.6 C26 12 24.8 15 22.6 16.8 V19 C29 21.8 30.5 23 30.5 26.2 V28.3 Z"/></g></svg>
<svg style="left:843px;top:676.6px;overflow:visible" width="30.8" height="30.8" viewBox="0 0 30.8 30.8"><g fill="none" stroke="#9496aa" stroke-width="1.3"><circle cx="15.4" cy="15.4" r="14.6"/>
<path d="M10.4 9.5 C10.4 5.5 12.4 3.8 15.4 3.8 C18.4 3.8 20.4 5.5 20.4 9.5 C20.4 13 18.4 16.5 15.4 16.5 C12.4 16.5 10.4 13 10.4 9.5 Z"/>
<path d="M4.5 25.5 C5 21 8 19.6 12 18.4 L15.4 22 L18.8 18.4 C22.8 19.6 25.8 21 26.3 25.5"/><path d="M14.2 22 H16.6 L17.4 28.5 L15.4 30 L13.4 28.5 Z"/><path d="M12 18.4 L11 22.5 L15.4 22 M18.8 18.4 L19.8 22.5 L15.4 22"/></g></svg>
<svg style="left:1099.3px;top:680px;overflow:visible" width="29" height="24" viewBox="0 0 29 24"><path d="M1.5 14.5 L8.6 21.5 L27.5 2.2" fill="none" stroke="#8d8fa4" stroke-width="1.7"/></svg>
<svg style="left:1361px;top:680.6px;overflow:visible" width="25" height="25" viewBox="0 0 25 25"><circle cx="12.5" cy="12.5" r="11.6" fill="none" stroke="#9496aa" stroke-width="1.5"/><path d="M12.5 5.5 V13 H18.6" fill="none" stroke="#9496aa" stroke-width="1.5"/></svg>
<span class="t" style="font-size:32px;line-height:32px;color:#45474a;top:55.91px;-webkit-text-stroke:0.3px #45474a;letter-spacing:-0.006px;left:323.75px;">SVJ Aplikace</span>
<span class="t" style="font-size:32px;line-height:32px;color:#6f7276;top:164.91px;-webkit-text-stroke:0.3px #6f7276;letter-spacing:0.231px;left:417.50px;">demo.svjaplikace.cz</span>
<span class="t" style="font-size:41px;line-height:41px;color:#ffffff;top:288.69px;letter-spacing:-0.155px;left:169.80px;">svj</span>
<span class="t" style="font-size:41px;line-height:41px;color:#ffffff;top:288.69px;-webkit-text-stroke:0.75px #ffffff;letter-spacing:2.195px;left:235.80px;">aplikace</span>
<span class="t" style="font-size:26px;line-height:26px;color:#a2a3b7;top:401.99px;letter-spacing:1.022px;left:116.00px;">Nástěnka</span>
<span class="t" style="font-size:22.3px;line-height:22.3px;color:#a3a4c6;top:490.12px;font-weight:700;letter-spacing:-0.452px;left:48.70px;">MENU</span>
<span class="t" style="font-size:22.3px;line-height:22.3px;color:#a3a4c6;top:1349.12px;font-weight:700;letter-spacing:-0.565px;left:48.40px;">SPOLEČENSTVÍ</span>
<span class="t" style="font-size:22.3px;line-height:22.3px;color:#a3a4c6;top:1820.12px;font-weight:700;letter-spacing:-0.375px;left:48.60px;">PODPORA</span>
<span class="t" style="font-size:22.3px;line-height:22.3px;color:#a3a4c6;top:1905.12px;font-weight:700;letter-spacing:0.357px;left:48.60px;">KOMUNITA</span>
<span class="t" style="font-size:22.3px;line-height:22.3px;color:#a3a4c6;top:1990.12px;font-weight:700;letter-spacing:-0.078px;left:48.60px;">KONTAKTNÍ OSOBA</span>
<span class="t" style="font-size:26px;line-height:26px;color:#a2a3b7;top:568.19px;letter-spacing:1.102px;left:145.00px;">Kalendář událostí</span>
<span class="t" style="font-size:26px;line-height:26px;color:#a2a3b7;top:645.59px;letter-spacing:1.438px;left:145.00px;">Dokumenty</span>
<span class="t" style="font-size:26px;line-height:26px;color:#a2a3b7;top:722.59px;letter-spacing:1.006px;left:145.00px;">Zprávy</span>
<span class="t" style="font-size:26px;line-height:26px;color:#ffffff;top:799.19px;letter-spacing:0.863px;left:145.00px;">Vlastníci a sousedé</span>
<span class="t" style="font-size:26px;line-height:26px;color:#a2a3b7;top:876.59px;letter-spacing:1.275px;left:145.00px;">Jednotky</span>
<span class="t" style="font-size:26px;line-height:26px;color:#a2a3b7;top:953.59px;letter-spacing:0.391px;left:145.00px;">Hlášení</span>
<span class="t" style="font-size:26px;line-height:26px;color:#a2a3b7;top:1030.59px;letter-spacing:0.800px;left:145.00px;">Ankety</span>
<span class="t" style="font-size:26px;line-height:26px;color:#a2a3b7;top:1107.59px;letter-spacing:0.797px;left:145.00px;">Hlasování</span>
<span class="t" style="font-size:26px;line-height:26px;color:#a2a3b7;top:1166.39px;letter-spacing:1.034px;left:145.00px;">Shromáždění</span>
<span class="t" style="font-size:26px;line-height:26px;color:#a2a3b7;top:1203.79px;letter-spacing:0.861px;left:145.00px;">vlastníků</span>
<span class="t" style="font-size:26px;line-height:26px;color:#a2a3b7;top:1264.99px;letter-spacing:0.942px;left:145.00px;">Fotogalerie</span>
<span class="t" style="font-size:26px;line-height:26px;color:#a2a3b7;top:1426.59px;letter-spacing:0.931px;left:145.00px;">Detail společenství</span>
<span class="t" style="font-size:26px;line-height:26px;color:#a2a3b7;top:1503.49px;letter-spacing:1.129px;left:145.00px;">Adresář kontaktů</span>
<span class="t" style="font-size:26px;line-height:26px;color:#a2a3b7;top:1580.49px;letter-spacing:1.083px;left:145.00px;">Pokladna</span>
<span class="t" style="font-size:26px;line-height:26px;color:#a2a3b7;top:1657.99px;letter-spacing:1.057px;left:145.00px;">Přehled poplatků</span>
<span class="t" style="font-size:26px;line-height:26px;color:#a2a3b7;top:1734.99px;letter-spacing:1.455px;left:145.00px;">Video chat</span>
<span class="t" style="font-size:20px;line-height:20px;color:#ffffff;top:955.77px;left:345.60px;width:200px;text-align:center;">1</span>
<span class="t" style="font-size:20px;line-height:20px;color:#ffffff;top:1032.77px;left:345.60px;width:200px;text-align:center;">1</span>
<span class="t" style="font-size:20px;line-height:20px;color:#ffffff;top:1109.77px;left:345.60px;width:200px;text-align:center;">1</span>
<span class="t" style="font-size:20px;line-height:20px;color:#ffffff;top:1187.27px;left:345.60px;width:200px;text-align:center;">1</span>
<span class="t" style="font-size:23px;line-height:23px;color:#5d78ff;top:296.53px;font-weight:700;letter-spacing:0.079px;left:601.00px;">Ukázkové společenství vlastníků jednotek SVJ Aplikace</span>
<span class="t" style="font-size:25.5px;line-height:25.5px;color:#646c9a;top:297.91px;-webkit-text-stroke:0.4px #646c9a;letter-spacing:1.525px;left:1984.00px;">Přepnout pohled člena výboru</span>
<span class="t" style="font-size:24.5px;line-height:24.5px;color:#5d78ff;top:297.46px;-webkit-text-stroke:0.5px #5d78ff;left:2374.50px;width:200px;text-align:center;transform:scaleX(0.9261);transform-origin:50% 50%;">PF</span>
<span class="t" style="font-size:28.6px;line-height:28.6px;color:#4a4c5e;top:295.29px;letter-spacing:-1.181px;left:2534.50px;">JUDr. Petr</span>
<span class="t" style="font-size:28.6px;line-height:28.6px;color:#222222;top:295.29px;font-weight:700;letter-spacing:-0.822px;left:2665.75px;">Fidler</span>
<span class="t" style="font-size:26px;line-height:26px;color:#6c7293;top:294.99px;-webkit-text-stroke:0.4px #6c7293;letter-spacing:1.301px;left:2837.00px;">Odhlásit</span>
<span class="t" style="font-size:27px;line-height:27px;color:#8d91a8;top:402.84px;letter-spacing:0.989px;left:616.00px;">Vyhledat</span>
<span class="t" style="font-size:38.2px;line-height:38.2px;color:#6c7293;top:541.66px;letter-spacing:1.935px;left:636.00px;">Vlastníci a sousedé</span>
<span class="t" style="font-size:26px;line-height:26px;color:#ffffff;top:550.49px;letter-spacing:0.946px;left:2738.00px;">Přidat souseda</span>
<span class="t" style="font-size:26px;line-height:26px;color:#5d78ff;top:678.99px;letter-spacing:0.674px;left:651.00px;">Sousedé</span>
<span class="t" style="font-size:26px;line-height:26px;color:#5b5f72;top:678.99px;letter-spacing:0.059px;left:887.70px;">Výbor SVJ</span>
<span class="t" style="font-size:26px;line-height:26px;color:#5b5f72;top:678.99px;letter-spacing:0.750px;left:1144.00px;">Aktivovaní</span>
<span class="t" style="font-size:26px;line-height:26px;color:#5b5f72;top:678.99px;letter-spacing:0.990px;left:1402.70px;">Čekají na aktivaci</span>
<span class="t" style="font-size:20px;line-height:20px;color:#5d78ff;top:682.27px;-webkit-text-stroke:0.4px #5d78ff;left:688.80px;width:200px;text-align:center;">28</span>
<span class="t" style="font-size:20px;line-height:20px;color:#5d78ff;top:682.27px;-webkit-text-stroke:0.4px #5d78ff;left:942.50px;width:200px;text-align:center;">4</span>
<span class="t" style="font-size:20px;line-height:20px;color:#5d78ff;top:682.27px;-webkit-text-stroke:0.4px #5d78ff;left:1202.20px;width:200px;text-align:center;">28</span>
<span class="t" style="font-size:20px;line-height:20px;color:#5d78ff;top:682.27px;-webkit-text-stroke:0.4px #5d78ff;left:1553.20px;width:200px;text-align:center;">0</span>
<span class="t" style="font-size:26px;line-height:26px;color:#5d78ff;top:681.74px;letter-spacing:0.580px;left:2600.00px;">Podle příjmení:</span>
<span class="t" style="font-size:26px;line-height:26px;color:#5d78ff;top:681.74px;font-weight:700;letter-spacing:-0.008px;left:2802.00px;">Vše</span>
<span class="t" style="font-size:28.6px;line-height:28.6px;color:#232323;top:833.79px;-webkit-text-stroke:0.5px #232323;letter-spacing:1.605px;left:671.75px;">Jméno</span>
<span class="t" style="font-size:28.6px;line-height:28.6px;color:#232323;top:833.79px;-webkit-text-stroke:0.5px #232323;letter-spacing:1.230px;left:1333.30px;">Vchod</span>
<span class="t" style="font-size:28.6px;line-height:28.6px;color:#232323;top:833.79px;-webkit-text-stroke:0.5px #232323;letter-spacing:1.594px;left:1743.30px;">E-mail</span>
<span class="t" style="font-size:28.6px;line-height:28.6px;color:#232323;top:833.79px;-webkit-text-stroke:0.5px #232323;letter-spacing:0.749px;left:2239.30px;">Telefon</span>
<span class="t" style="font-size:28.6px;line-height:28.6px;color:#232323;top:833.79px;-webkit-text-stroke:0.5px #232323;letter-spacing:0.241px;left:2524.00px;">Akce</span>
<span class="t" style="font-size:24.5px;line-height:24.5px;color:#ff9a20;top:939.56px;-webkit-text-stroke:0.5px #ff9a20;left:612.80px;width:200px;text-align:center;transform:scaleX(0.9178);transform-origin:50% 50%;">EB</span>
<span class="t" style="font-size:29.2px;line-height:29.2px;color:#545457;top:937.38px;letter-spacing:-1.725px;left:759.00px;">Erika</span>
<span class="t" style="font-size:29.2px;line-height:29.2px;color:#1f1f1f;top:937.38px;font-weight:700;letter-spacing:-0.509px;left:827.50px;">Bálková</span>
<span class="t" style="font-size:29.2px;line-height:29.2px;color:#545457;top:937.38px;letter-spacing:-0.915px;left:1333.30px;">Uliční 473/16</span>
<span class="t" style="font-size:29.2px;line-height:29.2px;color:#545457;top:937.38px;letter-spacing:-0.217px;left:1743.20px;">balkova@vzorukazky.cz</span>
<span class="t" style="font-size:29.2px;line-height:29.2px;color:#545457;top:937.38px;left:2238.60px;transform:scaleX(0.9210);transform-origin:0 50%;">709 781 047</span>
<span class="t" style="font-size:24.5px;line-height:24.5px;color:#ff9a20;top:1054.41px;-webkit-text-stroke:0.5px #ff9a20;left:612.80px;width:200px;text-align:center;transform:scaleX(0.9943);transform-origin:50% 50%;">BB</span>
<span class="t" style="font-size:29.2px;line-height:29.2px;color:#545457;top:1052.23px;letter-spacing:-0.514px;left:759.00px;">Blažena</span>
<span class="t" style="font-size:29.2px;line-height:29.2px;color:#1f1f1f;top:1052.23px;font-weight:700;letter-spacing:-0.655px;left:871.00px;">Bártů</span>
<span class="t" style="font-size:29.2px;line-height:29.2px;color:#545457;top:1052.23px;letter-spacing:-1.006px;left:1333.30px;">Uliční 473/12</span>
<span class="t" style="font-size:29.2px;line-height:29.2px;color:#545457;top:1052.23px;letter-spacing:-0.182px;left:1743.20px;">bartu@vzorukazky.cz</span>
<span class="t" style="font-size:29.2px;line-height:29.2px;color:#545457;top:1052.23px;left:2238.60px;transform:scaleX(0.9647);transform-origin:0 50%;">726 732 309</span>
<span class="t" style="font-size:24.5px;line-height:24.5px;color:#5d78ff;top:1169.26px;-webkit-text-stroke:0.5px #5d78ff;left:612.80px;width:200px;text-align:center;transform:scaleX(1.0702);transform-origin:50% 50%;">JB</span>
<span class="t" style="font-size:29.2px;line-height:29.2px;color:#545457;top:1167.08px;letter-spacing:-0.260px;left:759.00px;">Bc. Jindřich</span>
<span class="t" style="font-size:29.2px;line-height:29.2px;color:#1f1f1f;top:1167.08px;font-weight:700;letter-spacing:-1.103px;left:916.80px;">Bedník</span>
<span class="t" style="font-size:29.2px;line-height:29.2px;color:#545457;top:1167.08px;letter-spacing:-0.915px;left:1333.30px;">Uliční 473/16</span>
<span class="t" style="font-size:29.2px;line-height:29.2px;color:#545457;top:1167.08px;letter-spacing:-0.334px;left:1743.20px;">bendik@vzorukazky.cz</span>
<span class="t" style="font-size:29.2px;line-height:29.2px;color:#545457;top:1167.08px;left:2238.60px;transform:scaleX(0.9278);transform-origin:0 50%;">729 817 450</span>
<span class="t" style="font-size:24.5px;line-height:24.5px;color:#ff9a20;top:1284.11px;-webkit-text-stroke:0.5px #ff9a20;left:612.80px;width:200px;text-align:center;transform:scaleX(1.0683);transform-origin:50% 50%;">JD</span>
<span class="t" style="font-size:29.2px;line-height:29.2px;color:#545457;top:1281.93px;letter-spacing:-0.110px;left:759.00px;">Jiřina</span>
<span class="t" style="font-size:29.2px;line-height:29.2px;color:#1f1f1f;top:1281.93px;font-weight:700;letter-spacing:-0.221px;left:838.20px;">Dvořáková</span>
<span class="t" style="font-size:29.2px;line-height:29.2px;color:#545457;top:1281.93px;letter-spacing:-1.006px;left:1333.30px;">Uliční 473/12</span>
<span class="t" style="font-size:29.2px;line-height:29.2px;color:#545457;top:1281.93px;letter-spacing:-0.114px;left:1743.20px;">dvorakova@vzorukazky.cz</span>
<span class="t" style="font-size:29.2px;line-height:29.2px;color:#545457;top:1281.93px;left:2238.60px;transform:scaleX(0.9980);transform-origin:0 50%;">726 086 903</span>
<span class="t" style="font-size:24.5px;line-height:24.5px;color:#5d78ff;top:1398.96px;-webkit-text-stroke:0.5px #5d78ff;left:612.80px;width:200px;text-align:center;transform:scaleX(0.9261);transform-origin:50% 50%;">PF</span>
<span class="t" style="font-size:29.2px;line-height:29.2px;color:#545457;top:1396.78px;letter-spacing:-1.312px;left:759.00px;">JUDr. Petr</span>
<span class="t" style="font-size:29.2px;line-height:29.2px;color:#1f1f1f;top:1396.78px;font-weight:700;letter-spacing:-1.034px;left:890.70px;">Fidler</span>
<span class="t" style="font-size:29.2px;line-height:29.2px;color:#545457;top:1396.78px;letter-spacing:-1.006px;left:1333.30px;">Uliční 473/12</span>
<span class="t" style="font-size:29.2px;line-height:29.2px;color:#545457;top:1396.78px;letter-spacing:0.403px;left:1743.20px;">demopristup@svjaplikace.cz</span>
<span class="t" style="font-size:29.2px;line-height:29.2px;color:#545457;top:1396.78px;left:2238.60px;transform:scaleX(0.9142);transform-origin:0 50%;">735 572 201</span>
<span class="t" style="font-size:24.5px;line-height:24.5px;color:#ff9a20;top:1513.81px;-webkit-text-stroke:0.5px #ff9a20;left:612.80px;width:200px;text-align:center;transform:scaleX(0.9637);transform-origin:50% 50%;">LG</span>
<span class="t" style="font-size:29.2px;line-height:29.2px;color:#545457;top:1511.63px;letter-spacing:0.330px;left:759.00px;">Ludmila</span>
<span class="t" style="font-size:29.2px;line-height:29.2px;color:#1f1f1f;top:1511.63px;font-weight:700;letter-spacing:-0.271px;left:871.40px;">Glaserová</span>
<span class="t" style="font-size:29.2px;line-height:29.2px;color:#545457;top:1511.63px;letter-spacing:-0.915px;left:1333.30px;">Uliční 473/16</span>
<span class="t" style="font-size:29.2px;line-height:29.2px;color:#545457;top:1511.63px;letter-spacing:-0.123px;left:1743.20px;">glaserova@vzorukazky.cz</span>
<span class="t" style="font-size:29.2px;line-height:29.2px;color:#545457;top:1511.63px;left:2238.60px;transform:scaleX(0.9278);transform-origin:0 50%;">781 705 938</span>
<span class="t" style="font-size:24.5px;line-height:24.5px;color:#ff9a20;top:1628.66px;-webkit-text-stroke:0.5px #ff9a20;left:612.80px;width:200px;text-align:center;transform:scaleX(0.9986);transform-origin:50% 50%;">KH</span>
<span class="t" style="font-size:29.2px;line-height:29.2px;color:#545457;top:1626.48px;letter-spacing:-0.878px;left:759.00px;">Bc. Klára</span>
<span class="t" style="font-size:29.2px;line-height:29.2px;color:#1f1f1f;top:1626.48px;font-weight:700;letter-spacing:-0.416px;left:879.30px;">Hůrková</span>
<span class="t" style="font-size:29.2px;line-height:29.2px;color:#545457;top:1626.48px;letter-spacing:-0.865px;left:1333.30px;">Uliční 473/14</span>
<span class="t" style="font-size:29.2px;line-height:29.2px;color:#545457;top:1626.48px;letter-spacing:-0.319px;left:1743.20px;">hurkova@vzorukazky.cz</span>
<span class="t" style="font-size:29.2px;line-height:29.2px;color:#545457;top:1626.48px;left:2238.60px;transform:scaleX(0.8929);transform-origin:0 50%;">723 811 845</span>
<span class="t" style="font-size:24.5px;line-height:24.5px;color:#ff9a20;top:1743.51px;-webkit-text-stroke:0.5px #ff9a20;left:612.80px;width:200px;text-align:center;transform:scaleX(0.9693);transform-origin:50% 50%;">SH</span>
<span class="t" style="font-size:29.2px;line-height:29.2px;color:#545457;top:1741.33px;letter-spacing:-0.077px;left:759.00px;">Mgr. Sabina</span>
<span class="t" style="font-size:29.2px;line-height:29.2px;color:#1f1f1f;top:1741.33px;font-weight:700;letter-spacing:-0.197px;left:922.90px;">Hurtová</span>
<span class="t" style="font-size:29.2px;line-height:29.2px;color:#545457;top:1741.33px;letter-spacing:-0.865px;left:1333.30px;">Uliční 473/14</span>
<span class="t" style="font-size:29.2px;line-height:29.2px;color:#545457;top:1741.33px;letter-spacing:-0.175px;left:1743.20px;">hurtova@vzorukazky.cz</span>
<span class="t" style="font-size:29.2px;line-height:29.2px;color:#545457;top:1741.33px;left:2238.60px;transform:scaleX(0.9321);transform-origin:0 50%;">719 038 857</span>
<span class="t" style="font-size:24.5px;line-height:24.5px;color:#ff9a20;top:1858.36px;-webkit-text-stroke:0.5px #ff9a20;left:612.80px;width:200px;text-align:center;transform:scaleX(1.0850);transform-origin:50% 50%;">JC</span>
<span class="t" style="font-size:29.2px;line-height:29.2px;color:#545457;top:1856.18px;letter-spacing:0.768px;left:759.00px;">Jana</span>
<span class="t" style="font-size:29.2px;line-height:29.2px;color:#1f1f1f;top:1856.18px;font-weight:700;letter-spacing:0.069px;left:833.60px;">Chytrá</span>
<span class="t" style="font-size:29.2px;line-height:29.2px;color:#545457;top:1856.18px;letter-spacing:-1.006px;left:1333.30px;">Uliční 473/12</span>
<span class="t" style="font-size:29.2px;line-height:29.2px;color:#545457;top:1856.18px;letter-spacing:-0.181px;left:1743.20px;">chytra@vzorukazky.cz</span>
<span class="t" style="font-size:29.2px;line-height:29.2px;color:#545457;top:1856.18px;left:2238.60px;transform:scaleX(0.9234);transform-origin:0 50%;">741 740 524</span>
<span class="t" style="font-size:24.5px;line-height:24.5px;color:#5d78ff;top:1973.21px;-webkit-text-stroke:0.5px #5d78ff;left:612.80px;width:200px;text-align:center;transform:scaleX(1.1633);transform-origin:50% 50%;">JJ</span>
<span class="t" style="font-size:29.2px;line-height:29.2px;color:#545457;top:1971.03px;letter-spacing:-1.207px;left:759.00px;">Jiří</span>
<span class="t" style="font-size:29.2px;line-height:29.2px;color:#1f1f1f;top:1971.03px;font-weight:700;letter-spacing:-0.365px;left:802.50px;">Janoušek</span>
<span class="t" style="font-size:29.2px;line-height:29.2px;color:#545457;top:1971.03px;letter-spacing:-0.865px;left:1333.30px;">Uliční 473/14</span>
<span class="t" style="font-size:29.2px;line-height:29.2px;color:#545457;top:1971.03px;letter-spacing:-0.328px;left:1743.20px;">janousek@vzorukazky.cz</span>
<span class="t" style="font-size:29.2px;line-height:29.2px;color:#545457;top:1971.03px;left:2238.60px;transform:scaleX(0.9321);transform-origin:0 50%;">767 186 803</span>
</div></body></html>
